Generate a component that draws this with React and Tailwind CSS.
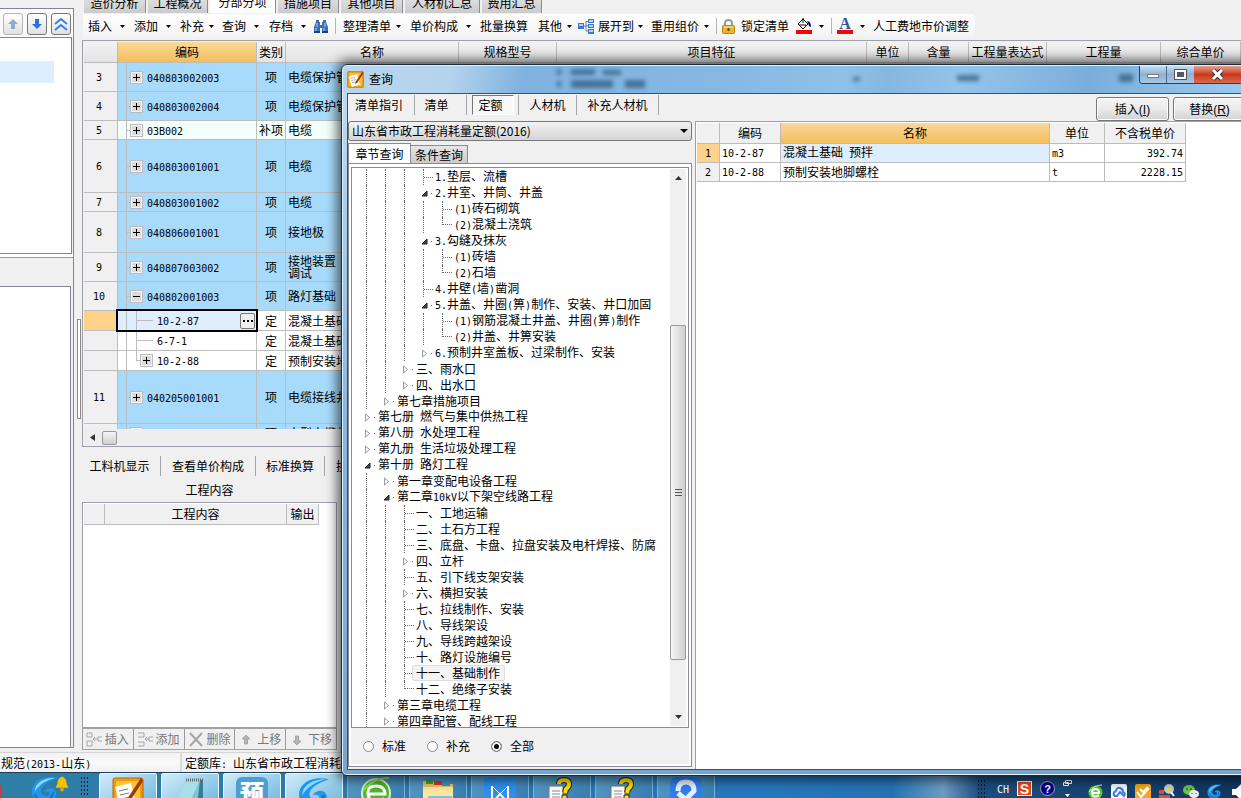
import React, { useState } from 'react'
import clsx from 'clsx'

const TABS = [
  { label: '造价分析', w: 'w-[62px]' },
  { label: '工程概况', w: 'w-[60px]' },
  { label: '分部分项', w: 'w-[66px]', active: true },
  { label: '措施项目', w: 'w-[61px]' },
  { label: '其他项目', w: 'w-[62px]' },
  { label: '人材机汇总', w: 'w-[75px]' },
  { label: '费用汇总', w: 'w-[60px]' },
]

const COLUMNS = [
  { label: '', w: 'w-[34px]' },
  { label: '编码', w: 'w-[139px]', active: true },
  { label: '类别', w: 'w-[29px]' },
  { label: '名称', w: 'w-[173px]' },
  { label: '规格型号', w: 'w-[98px]' },
  { label: '项目特征', w: 'w-[310px]' },
  { label: '单位', w: 'w-[42px]' },
  { label: '含量', w: 'w-[60px]' },
  { label: '工程量表达式', w: 'w-[78px]' },
  { label: '工程量', w: 'w-[114px]' },
  { label: '综合单价', w: 'w-auto' },
]

const ROWS = [
  { no: '3', code: '040803002003', kind: '项', name: '电缆保护管', h: 'h-[29px]', box: '+' },
  { no: '4', code: '040803002004', kind: '项', name: '电缆保护管', h: 'h-[29px]', box: '+' },
  { no: '5', code: '03B002', kind: '补项', name: '电缆', h: 'h-[19px]', box: '+', tone: 'bg-[#f2fffa]' },
  { no: '6', code: '040803001001', kind: '项', name: '电缆', h: 'h-[53px]', box: '+' },
  { no: '7', code: '040803001002', kind: '项', name: '电缆', h: 'h-[19px]', box: '+' },
  { no: '8', code: '040806001001', kind: '项', name: '接地极', h: 'h-[41px]', box: '+' },
  { no: '9', code: '040807003002', kind: '项', name: '接地装置调试', h: 'h-[29px]', box: '+' },
  { no: '10', code: '040802001003', kind: '项', name: '路灯基础', h: 'h-[29px]', box: '-' },
  { no: '', code: '10-2-87', kind: '定', name: '混凝土基础', h: 'h-[20px]', child: true, selected: true, tone: 'bg-white' },
  { no: '', code: '6-7-1', kind: '定', name: '混凝土基础', h: 'h-[20px]', child: true, tone: 'bg-white' },
  { no: '', code: '10-2-88', kind: '定', name: '预制安装地脚螺栓', h: 'h-[20px]', child: true, last: true, box: '+', tone: 'bg-white' },
  { no: '11', code: '040205001001', kind: '项', name: '电缆接线井', h: 'h-[53px]', box: '+' },
  { no: '12', code: '040205001002', kind: '项', name: '大型电缆井', h: 'h-[19px]', box: '+' },
]

// d = depth, s = open / closed / leaf / last
const TREE = [
  { d: 3, s: 'leaf', t: '1.垫层、流槽' },
  { d: 3, s: 'open', t: '2.井室、井筒、井盖' },
  { d: 4, s: 'leaf', t: '(1)砖石砌筑' },
  { d: 4, s: 'last', t: '(2)混凝土浇筑' },
  { d: 3, s: 'open', t: '3.勾缝及抹灰' },
  { d: 4, s: 'leaf', t: '(1)砖墙' },
  { d: 4, s: 'last', t: '(2)石墙' },
  { d: 3, s: 'leaf', t: '4.井壁(墙)凿洞' },
  { d: 3, s: 'open', t: '5.井盖、井圈(箅)制作、安装、井口加固' },
  { d: 4, s: 'leaf', t: '(1)钢筋混凝土井盖、井圈(箅)制作' },
  { d: 4, s: 'last', t: '(2)井盖、井箅安装' },
  { d: 3, s: 'closed', t: '6.预制井室盖板、过梁制作、安装' },
  { d: 2, s: 'closed', t: '三、雨水口' },
  { d: 2, s: 'closed', t: '四、出水口' },
  { d: 1, s: 'closed', t: '第七章措施项目' },
  { d: 0, s: 'closed', t: '第七册 燃气与集中供热工程' },
  { d: 0, s: 'closed', t: '第八册 水处理工程' },
  { d: 0, s: 'closed', t: '第九册 生活垃圾处理工程' },
  { d: 0, s: 'open', t: '第十册 路灯工程' },
  { d: 1, s: 'closed', t: '第一章变配电设备工程' },
  { d: 1, s: 'open', t: '第二章10kV以下架空线路工程' },
  { d: 2, s: 'leaf', t: '一、工地运输' },
  { d: 2, s: 'leaf', t: '二、土石方工程' },
  { d: 2, s: 'leaf', t: '三、底盘、卡盘、拉盘安装及电杆焊接、防腐' },
  { d: 2, s: 'closed', t: '四、立杆' },
  { d: 2, s: 'leaf', t: '五、引下线支架安装' },
  { d: 2, s: 'closed', t: '六、横担安装' },
  { d: 2, s: 'leaf', t: '七、拉线制作、安装' },
  { d: 2, s: 'leaf', t: '八、导线架设' },
  { d: 2, s: 'leaf', t: '九、导线跨越架设' },
  { d: 2, s: 'leaf', t: '十、路灯设施编号' },
  { d: 2, s: 'leaf', t: '十一、基础制作', selected: true },
  { d: 2, s: 'last', t: '十二、绝缘子安装' },
  { d: 1, s: 'closed', t: '第三章电缆工程' },
  { d: 1, s: 'closed', t: '第四章配管、配线工程' },
]

// Latin runs are set half as wide as a Chinese character
function T({ children }) {
  return String(children).split(/([\x20-\x7e]+)/).filter(Boolean).map((part, i) =>
    /^[\x20-\x7e]/.test(part)
      ? <span key={i} className="font-['DejaVu_Sans_Mono',monospace] text-[10px] whitespace-pre">{part}</span>
      : part
  )
}

const Caret = () => <svg width="5" height="3" className="shrink-0"><path d="M0 0h5L2.5 3z" fill="#000" /></svg>

function App() {
  return (
    <div className="relative flex h-screen flex-col overflow-hidden bg-[#f0f0f0] font-['Noto_Sans_CJK_SC',sans-serif] text-[12px] leading-4 text-black">
      <div className="flex min-h-0 flex-1">
        <SidePanel />
        <main className="flex min-w-0 flex-1 flex-col">
          <nav className="flex h-[13px] shrink-0 items-end overflow-hidden pl-[2px]">
            {TABS.map(t => (
              <button key={t.label} className={clsx('mr-[2px] h-[20px] shrink-0 border-r border-[#8a8a99]', t.w, t.active ? 'bg-white pb-[2px]' : 'bg-linear-to-b from-[#e6e6e6] to-[#cbcbcb]')}>{t.label}</button>
            ))}
          </nav>
          <Toolbar />
          <BillGrid />
          <DetailPanel />
        </main>
      </div>
      <footer className="flex h-[20px] shrink-0 border-t border-[#d5d5d5]">
        <div className="w-[182px] border-r-2 border-[#dadada] bg-linear-to-b from-[#f2f2f2] via-[#fafafa] to-[#efefef] pl-px leading-[20px]"><T>规范(2013-山东)</T></div>
        <div className="ml-[2px] flex-1 bg-linear-to-b from-[#f2f2f2] via-[#fafafa] to-[#efefef] pl-px leading-[20px]"><T>定额库: 山东省市政工程消耗量定额(2016)</T></div>
      </footer>
      <Taskbar />
      <QueryDialog />
    </div>
  )
}

function SidePanel() {
  const btn = 'flex h-[22px] w-[20px] items-center justify-center rounded-[3px] border bg-linear-to-b from-white to-[#e0e0e0]'
  return (
    <aside className="flex w-[82px] shrink-0">
      <div className="flex w-[74px] flex-col pt-2 pb-[4px]">
        <div className="flex min-h-0 flex-1 flex-col border-t border-r border-b border-[#85858f]">
          <div className="flex h-[28px] items-center gap-1 bg-[#fafafa] pt-[2px] pl-[3px]">
            <button aria-label="上移" className={clsx(btn, 'border-[#b5b5b5]')}>
              <svg width="10" height="10"><path d="M5 0l5 5H7v5H3V5H0z" fill="#8fa9d0" /></svg>
            </button>
            <button aria-label="下移" className={clsx(btn, 'border-[#777]')}>
              <svg width="10" height="10"><path d="M5 10l5-5H7V0H3v5H0z" fill="#2f6fe0" /></svg>
            </button>
            <button aria-label="置顶" className={clsx(btn, 'border-[#777]')}>
              <svg width="14" height="14" fill="none" stroke="#3a80e0" strokeWidth="2"><path d="M1 7l6-5 6 5M1 13l6-5 6 5" /></svg>
            </button>
          </div>
          <div className="mr-px h-[217px] border-t border-r border-b border-[#85858f] bg-white pt-[23px]">
            <div className="mr-[17px] h-[22px] bg-[#ddeeff]" />
          </div>
          <div className="h-[4px] border-b border-[#9a9aa2] bg-white" />
          <div className="h-[28px] bg-[#f0f0f0]" />
          <div className="mr-[2px] flex-1 border-t border-r border-[#85858f] bg-white" />
        </div>
      </div>
      <div className="flex flex-1 items-center pl-[3px]">
        <div className="mb-[14px] h-[100px] w-[4px] border border-[#888] bg-white" />
      </div>
    </aside>
  )
}

const MENU_A = [
  { label: '插入', c: 'w-[46px] gap-[8px]' },
  { label: '添加', c: 'w-[46px] gap-[8px]' },
  { label: '补充', c: 'w-[42px] gap-[5px]' },
  { label: '查询', c: 'w-[47px] gap-[8px]' },
  { label: '存档', c: 'w-[44px] gap-[8px]' },
]

function MenuButton({ label, c, icon, flat }) {
  return <button className={clsx('flex shrink-0 items-center whitespace-nowrap', c)}>{icon}{label}{!flat && <Caret />}</button>
}

function Toolbar() {
  return (
    <div className="mt-px mb-[3px] ml-px flex h-[23px] w-fit shrink-0 items-center rounded-r bg-linear-to-b from-white to-[#f3f3f3] pt-px pr-[6px] pl-[5px]">
      {MENU_A.map(m => <MenuButton key={m.label} {...m} />)}
      <button aria-label="查找" className="mr-[6px]">
        <svg width="16" height="15" viewBox="0 0 16 15">
          <path d="M3 1h3v2h1v3h2V3h1V1h3v2l2 5v6H9V9H7v5H1V8l2-5z" fill="#3d6fb5" />
          <path d="M4 4v4M12 4v4M3 9v4M11 9v4" stroke="#b8d4f5" />
          <path d="M1 13h6M9 13h6" stroke="#1e3f78" strokeWidth="2" />
        </svg>
      </button>
      <i className="mr-[7px] h-4 border-r border-[#b5b5b5]" />
      <MenuButton label="整理清单" c="w-[67px] gap-[5px]" />
      <MenuButton label="单价构成" c="w-[70px] gap-[8px]" />
      <MenuButton label="批量换算" c="w-[58px]" flat />
      <MenuButton label="其他" c="w-[40px] gap-[5px]" />
      <MenuButton label="展开到" c="w-[73px] gap-[4px]" icon={
        <svg width="16" height="15" viewBox="0 0 16 15">
          <path d="M6 7h4M8 2.5h2M8 12h2M8 2v10" stroke="#6d7f9c" fill="none" />
          <path d="M0 4h6v6H0zM10 0h6v4h-6zM10 5h6v4h-6zM10 10h6v5h-6z" fill="#3b76d4" />
          <path d="M1 6h4M11 2h4M11 7h4M11 12h4" stroke="#b9d3fa" strokeWidth="2" />
        </svg>} />
      <MenuButton label="重用组价" c="w-[65px] gap-[5px]" />
      <i className="mr-[5px] h-4 border-r border-[#b5b5b5]" />
      <MenuButton label="锁定清单" c="w-[74px] gap-[6px]" flat icon={
        <svg width="13" height="15" viewBox="0 0 13 15">
          <path d="M3 7V4a3.5 3 0 017 0v3" fill="none" stroke="#999" strokeWidth="2" />
          <rect x=".5" y="6.5" width="12" height="8" rx="1" fill="#eab62f" stroke="#b98212" />
          <path d="M2 8h9" stroke="#fff0a8" /><path d="M6.500 9v3" stroke="#6b4a00" strokeWidth="2" />
        </svg>} />
      <button aria-label="填充颜色" className="flex w-[35px] items-center gap-[7px]">
        <svg width="16" height="16" viewBox="0 0 16 16">
          <path d="M2 6l5-5 5 5-5 5z" fill="#fff" stroke="#000" /><path d="M7 0v5M3 7h7" stroke="#000" />
          <path d="M11 3q4 0 4 6l-2-1-1-3z" fill="#00007a" /><path d="M0 12h16v4H0z" fill="#f00" />
        </svg>
        <Caret />
      </button>
      <i className="mr-[5px] h-4 border-r border-[#b5b5b5]" />
      <button aria-label="字体颜色" className="flex w-[36px] items-center gap-[7px]">
        <span className="flex h-4 w-4 items-center justify-center border-b-4 border-[#f00] font-['Liberation_Serif',serif] text-[16px] leading-3 font-bold text-[#2f55a0]">A</span>
        <Caret />
      </button>
      <MenuButton label="人工费地市价调整" c="" flat />
    </div>
  )
}

function TreeBox({ sign }) {
  return (
    <svg width="13" height="13" className="shrink-0">
      <rect x=".5" y=".5" width="12" height="12" fill="#f4f4f4" stroke="#bdbdbd" />
      <rect x="2" y="2" width="9" height="9" fill="#dcdcdc" />
      <path d={sign === '+' ? 'M3 6.500h7M6.500 3v7' : 'M3 6.500h7'} stroke="#000" />
    </svg>
  )
}

function CodeCell({ row }) {
  if (!row.child) {
    return (
      <div className="flex h-full items-center">
        <i className="ml-[8px] h-full border-l border-[#bdbdbd]" />
        <i className="w-[3px] border-t border-[#bdbdbd]" />
        <TreeBox sign={row.box} />
        <span className="pt-px pl-1"><T>{row.code}</T></span>
      </div>
    )
  }
  return (
    <div className={clsx('flex h-full items-center', row.selected && 'relative bg-[#deeeff] outline-2 outline-black')}>
      <i className="ml-[8px] h-full border-l border-[#bdbdbd]" />
      <i className={clsx('ml-[9px] self-start border-l border-[#bdbdbd]', row.last ? 'h-1/2' : 'h-full')} />
      <i className={clsx('border-t border-[#bdbdbd]', row.box ? 'w-[3px]' : 'w-4')} />
      {row.box && <TreeBox sign={row.box} />}
      <span className="pt-px pl-1"><T>{row.code}</T></span>
      {row.selected && (
        <button aria-label="选择" className="mr-px ml-auto flex h-4 w-[15px] items-center justify-center gap-[2px] rounded-[2px] border border-[#777] bg-[#eee]">
          <i className="size-[2px] bg-black" /><i className="size-[2px] bg-black" /><i className="size-[2px] bg-black" />
        </button>
      )}
    </div>
  )
}

function BillGrid() {
  return (
    <section className="flex min-h-0 flex-1 flex-col border border-r-0 border-[#a0a0aa] pt-px pl-px">
      <div className="min-h-0 flex-1 overflow-hidden">
        <table className="w-full table-fixed border-separate border-spacing-0 leading-[14px]">
          <thead>
            <tr>
              {COLUMNS.map((c, i) => (
                <th key={i} className={clsx('h-[21px] overflow-hidden border-r border-b border-[#bcbcbc] p-0 font-normal whitespace-nowrap', c.w, c.active ? 'bg-linear-to-b from-[#fad898] to-[#f3be5c]' : 'bg-linear-to-b from-[#f2f2f2] to-[#e4e4e4]')}>{c.label}</th>
              ))}
            </tr>
          </thead>
          <tbody>
            {ROWS.map((r, i) => {
              const cell = clsx('overflow-hidden border-r border-b border-[#bdbdbd] p-0', r.h, r.tone || 'bg-[#a8dbfb]')
              return (
                <tr key={i}>
                  <td className={clsx('border-r border-b border-[#bdbdbd] p-0 pr-[3px] text-center', r.selected ? 'bg-[#ffd28c]' : 'bg-[#f0f0f0]')}><T>{r.no}</T></td>
                  <td className={clsx(cell, 'overflow-visible')}><CodeCell row={r} /></td>
                  <td className={clsx(cell, 'text-center whitespace-nowrap')}>{r.kind}</td>
                  <td className={clsx(cell, 'pl-[2px]')}><div className="w-[54px] leading-3">{r.name.length > 5 && !r.child ? r.name : <span className="whitespace-nowrap">{r.name}</span>}</div></td>
                  {COLUMNS.slice(4).map(c => <td key={c.label} className={cell} />)}
                </tr>
              )
            })}
          </tbody>
        </table>
      </div>
      <div className="flex h-[17px] shrink-0 items-center gap-[7px] bg-[#eee] pl-[6px]">
        <svg width="5" height="7"><path d="M5 0v7L0 3.500z" fill="#333" /></svg>
        <div className="h-[14px] w-[15px] rounded-[2px] border border-[#999] bg-linear-to-b from-[#f5f5f5] to-[#d0d0d0]" />
      </div>
    </section>
  )
}

const GRAY_BTNS = [
  { label: '插入', d: 'M1 1h5v4H1zM1 9h5v5H1zM16 5h-4v4h4M12 7H7M9 5L7 7l2 2' },
  { label: '添加', d: 'M1 1h6v4H1M1 10h6v4H1M16 5h-4v4h4M12 7H8M10 5L8 7l2 2' },
  { label: '删除', d: 'M2 1l12 13M14 1L2 14' },
  { label: '上移', d: 'M8 3l4 4H9.500v5h-3V7H4z' },
  { label: '下移', d: 'M8 13l4-4H9.500V4h-3v5H4z' },
]

function DetailPanel() {
  const sep = 'h-5 border-r border-[#a5a5a5] leading-5'
  return (
    <section className="shrink-0 overflow-hidden whitespace-nowrap">
      <div className="flex pt-[9px]">
        <button className={clsx(sep, 'w-[79px] pr-[3px]')}>工料机显示</button>
        <button className={clsx(sep, 'w-[95px]')}>查看单价构成</button>
        <button className={clsx(sep, 'w-[69px]')}>标准换算</button>
        <button className="pl-[11px] leading-5">换算信息</button>
      </div>
      <div className="w-[255px]">
        <h2 className="pt-1 pb-[2px] text-center leading-[20px]">工程内容</h2>
        <div className="h-[225px] border border-b-0 border-[#a0a0aa] bg-white pt-px pl-px">
          <table className="table-fixed border-separate border-spacing-0 bg-[#f0f0f0]">
            <thead>
              <tr>
                <th className="h-[21px] w-[21px] border-r border-b border-[#bcbcbc] p-0" />
                <th className="w-[182px] border-r border-b border-[#bcbcbc] p-0 font-normal">工程内容</th>
                <th className="w-[32px] border-r border-b border-[#bcbcbc] p-0 font-normal">输出</th>
              </tr>
            </thead>
          </table>
        </div>
        <div className="mb-[2px] flex h-[23px] border-t-2 border-b border-l border-[#a0a0a0]">
          {GRAY_BTNS.map(b => (
            <button key={b.label} disabled className="flex flex-1 items-center justify-between border-r border-[#999] bg-[#f0f0f0] pr-1 pl-[3px] text-[#777]">
              <svg width="17" height="15" fill="none" stroke="#a5a5a5"><path d={b.d} strokeWidth={b.label === '删除' ? 2 : 1} fill={b.label.includes('移') ? '#b5b5b5' : 'none'} /></svg>
              {b.label}
            </button>
          ))}
        </div>
      </div>
    </section>
  )
}

function Swirl({ size = 30 }) {
  return (
    <svg width={size} height={size} viewBox="0 0 30 30" className="shrink-0">
      <path d="M29 2C17-1 1 3 1 17c0 8 6 12 13 12 8 0 13-5 13-12-2-4-6-5-10-3-2 1-3 2-3 3 3-1 6 0 6 2 0 3-7 4-9-1-2-7 7-12 18-16z" fill="#2196ea" />
      <path d="M26 2C13 2 4 8 4 17 8 10 15 5 26 2z" fill="#8ad8ff" />
      <path d="M4 20q3 7 11 6 8-1 9-9" fill="none" stroke="#0f6fc4" strokeWidth="2" />
    </svg>
  )
}

function PenIcon({ size = 32 }) {
  return (
    <svg width={size} height={size} viewBox="0 0 32 32">
      <rect x="1" y="1" width="30" height="30" rx="2" fill="#f29a0c" stroke="#b9600a" />
      <rect x="4" y="4" width="24" height="24" fill="#ffc52e" />
      <path d="M3 10l16-4 5 20-15 4z" fill="#fff" /><path d="M7 14l9-2M8 18l9-2M9 22l9-2" stroke="#777" />
      <path d="M29 1L17 19l-2 6 5-4L31 4z" fill="#9c3b10" />
    </svg>
  )
}

const HelpDoc = () => (
  <svg width="32" height="32" viewBox="0 0 32 32">
    <path d="M3 9h14v21H3z" fill="#fff" stroke="#777" /><path d="M6 14h8M6 17h8M6 20h8" stroke="#888" />
    <path d="M13 7q0-4 5-4t5 4q0 3-3 5l-1 4" fill="none" stroke="#222" strokeWidth="6" />
    <path d="M13 7q0-4 5-4t5 4q0 3-3 5l-1 4" fill="none" stroke="#ffe100" strokeWidth="4" />
    <path d="M16 18h5v4h-5z" fill="#ffe100" stroke="#222" />
  </svg>
)

const TASKS = [
  { name: '计价软件', on: true, icon: <PenIcon /> },
  { name: '记事本', on: true, icon: (
    <svg width="32" height="32" viewBox="0 0 32 32"><path d="M12 3h17l-6 26H0z" fill="#7fc4d4" /><path d="M12 3h14L14 29H0z" fill="#a9dfe8" /><path d="M26 3h3v26h-6z" fill="#337f94" /><path d="M12 3h17" stroke="#666" strokeWidth="3" strokeDasharray="1 1" /></svg>) },
  { name: '预算', on: true, icon: <span className="h-8 w-8 rounded-md bg-[#4d9fd0] text-center text-[24px] leading-[30px] font-black text-white">预</span> },
  { name: '广联达', on: true, icon: <Swirl size={32} /> },
  { name: '浏览器', icon: (
    <svg width="32" height="32" viewBox="0 0 32 32"><circle cx="16" cy="16" r="14" fill="#4fb52c" stroke="#d6f2c8" strokeWidth="2" /><path d="M8 17h17q0-8-9-8t-8 8 8 8q5 0 8-4" fill="none" stroke="#fff" strokeWidth="3" /><path d="M3 14Q14 0 29 1" fill="none" stroke="#8be35d" strokeWidth="2" /></svg>) },
  { name: '资源管理器', icon: (
    <svg width="32" height="32" viewBox="0 0 32 32"><path d="M1 4h10l2 3h18v24H1z" fill="#e9c865" /><path d="M4 2h7v5H4z" fill="#3f9e3a" /><path d="M12 4h8v4h-8z" fill="#d33" /><path d="M20 5h8v4h-8z" fill="#39c" /><path d="M1 10h30v21H1z" fill="#fbe7a0" /><path d="M6 19h24v12H6z" fill="#79c4ea" /></svg>) },
  { name: 'WPS', icon: (
    <svg width="32" height="32" viewBox="0 0 32 32"><rect width="32" height="32" rx="4" fill="#2f8fef" /><path d="M8 9v17l8-9 8 9V9" fill="none" stroke="#fff" strokeWidth="2" /><path d="M8 9l8 8 8-8" fill="none" stroke="#fff" /></svg>) },
  { name: '帮助一', icon: <HelpDoc /> },
  { name: '帮助二', icon: <HelpDoc /> },
  { name: '云盘', icon: (
    <svg width="32" height="32" viewBox="0 0 32 32"><rect width="32" height="32" rx="7" fill="#2d7ff0" /><path d="M8 14q0-9 8-9t8 9L12 26M8 16l14 12" fill="none" stroke="#e8f2ff" strokeWidth="5" /></svg>) },
]

function Grip() {
  return <i className="h-5 w-[9px] shrink-0 bg-[radial-gradient(#0a2036_1px,transparent_1px)] bg-size-[3px_4px]" />
}

function Taskbar() {
  return (
    <div className="flex h-[26px] shrink-0 items-start overflow-hidden border-t border-[#1c3d55] bg-[linear-gradient(90deg,#2f7ea6_0%,#2c76ae_40%,#2577bd_60%,#2673b4_72%,#6d9cc4_76%,#1b4d7f_79%,#12375f_100%)]">
      <div className="flex w-[99px] shrink-0 items-start pt-[3px]">
        <i className="mt-[9px] mr-[29px] h-4 w-[2px] bg-[#d33c3c]" />
        <Swirl size={28} />
        <svg width="14" height="16" viewBox="0 0 15 16" className="-ml-1 shrink-0"><path d="M7.500 0q5 2 5 8l2 4H.5l2-4q0-6 5-8z" fill="#f2c200" /><circle cx="7.500" cy="14" r="2" fill="#e0a800" /></svg>
        <span className="ml-[11px] flex"><Grip /></span>
      </div>
      {TASKS.map(t => (
        <button key={t.name} aria-label={t.name} className={clsx('mr-1 flex h-[40px] w-[58px] shrink-0 justify-center rounded-[2px] border pt-[3px]', t.on ? 'border-[#eaf8ff] bg-linear-to-br from-[#d0ecf9] to-[#62b2dc]' : 'border-[#7fb6d6] bg-linear-to-br from-[#5d9fc8] to-[#2d75ad]')}>{t.icon}</button>
      ))}
      <div className="ml-auto flex h-full shrink-0 items-center gap-[8px] pt-[6px] text-white">
        <Grip />
        <span className="ml-[3px]"><T>CH</T></span>
        <span className="flex size-[15px] items-center justify-center border border-white bg-[#e8491d] font-['Liberation_Sans',sans-serif] text-[14px] font-bold">S</span>
        <span className="flex size-[15px] items-center justify-center rounded-full border border-[#aaa] bg-[#00008c] font-['Liberation_Sans',sans-serif] text-[11px] font-bold">?</span>
        <svg width="9" height="18" fill="none" stroke="#fff"><path d="M2.500.5h6v3h-6zM.5 2.500h5v3h-5z" /><path d="M2 14h5l-2.500 3z" fill="#fff" stroke="none" /></svg>
        <div className="flex gap-[8px] pt-[6px] pl-[8px]">
          <svg width="15" height="16" viewBox="0 0 15 16"><circle cx="7.500" cy="8.500" r="7" fill="#5fc336" /><path d="M4 9h7q0-4-3.500-4T4 9t4 3.500l3-1" fill="none" stroke="#fff" strokeWidth="2" /><path d="M1 8Q6 1 14 1" fill="none" stroke="#d8f7c9" /></svg>
          <svg width="16" height="16"><rect width="16" height="16" rx="2" fill="#f5f9ff" /><path d="M4 12q-2-1-1-3.500L5 7q1-4 4-3t3 4q3 1 1 4L9 8l-3 4z" fill="none" stroke="#3b7de0" strokeWidth="2" /></svg>
          <svg width="16" height="16"><rect width="16" height="16" rx="2" fill="#f5a71c" /><path d="M2 8l4 5 8-9M5 5l3 3 5-5" fill="none" stroke="#fff" strokeWidth="2" /></svg>
          <svg width="16" height="16"><path d="M0 6h5v4H0zM0 11h11v5H0z" fill="#d8532b" /><circle cx="10" cy="5" r="4" fill="#f2cf63" stroke="#a9cdf0" strokeWidth="2" /><path d="M12 8l3 4" stroke="#fff" strokeWidth="2" /></svg>
          <svg width="16" height="16"><ellipse cx="6" cy="6" rx="6" ry="5" fill="#6cc644" /><ellipse cx="11" cy="10" rx="5" ry="4" fill="#eee" /><path d="M4 4v2M8 4v2M9 9v1M13 9v1" stroke="#333" /></svg>
          <Swirl size={15} />
          <svg width="9" height="16" className="ml-[2px]"><path d="M0 5h4l5-5v16l-5-5H0z" fill="#fff" /></svg>
        </div>
      </div>
    </div>
  )
}

function TreeRow({ node }) {
  const leaf = node.s === 'leaf' || node.s === 'last'
  return (
    <li className="flex h-4 items-center whitespace-nowrap">
      {Array.from({ length: node.d }, (_, k) => (
        <i key={k} className="h-full w-[19px] shrink-0 pl-[9px]"><i className="block h-full border-l border-dotted border-[#666]" /></i>
      ))}
      {leaf ? (
        <span className="h-full w-[21px] shrink-0 pl-[9px]">
          <i className={clsx('flex w-[10px] items-center border-l border-dotted border-[#666]', node.s === 'last' ? 'h-1/2 border-b' : 'h-full')}>
            {node.s === 'leaf' && <i className="w-[9px] border-t border-dotted border-[#666]" />}
          </i>
        </span>
      ) : (
        <button aria-label={node.s === 'open' ? '折叠' : '展开'} className="flex w-[21px] shrink-0 items-center gap-[3px] pl-[7px]">
          {node.s === 'open'
            ? <svg width="7" height="7"><path d="M6 1v5H1z" fill="#444" stroke="#222" /></svg>
            : <svg width="7" height="9"><path d="M1.500 1v7l4-3.500z" fill="#fff" stroke="#9a9a9a" /></svg>}
          <i className="size-px bg-[#666]" />
        </button>
      )}
      <span className={clsx(node.selected && '-ml-1 rounded-[2px] border border-[#ddd] bg-[#f3f3f3] pr-1 pl-[3px] leading-[14px]')}><T>{node.t}</T></span>
    </li>
  )
}

function QueryDialog() {
  const [range, setRange] = useState('全部')
  const tab = 'h-5 border-r border-[#a5a5a5] leading-5 whitespace-nowrap'
  const push = 'h-6 w-[73px] rounded-[3px] border border-[#777] bg-linear-to-b from-[#f6f6f6] via-[#eaeaea] to-[#d2d2d2] shadow-[inset_0_0_0_1px_#fff]'
  return (
    <div role="dialog" aria-label="查询" className="absolute top-[64px] -right-[12px] bottom-[22px] left-[341px] flex flex-col rounded-[6px] border border-[#1c2b38] bg-linear-to-b from-[#c4ddf0] via-[#84b8e4] to-[#7aa4cc] px-[5px] pb-[5px] shadow-[0_0_12px_4px_rgba(0,0,0,0.6),inset_0_0_0_1px_#e3f1fc]">
      <header className="-mx-[4px] mt-px flex h-[27px] shrink-0 overflow-hidden rounded-t-[5px] bg-[linear-gradient(100deg,#b9d6ee_0%,#b4d3ed_12%,#7fb2de_20%,#86b8e2_42%,#8fc0e8_55%,#86b7e0_60%,#95c4ea_68%,#7aaeda_82%,#9bcaf0_100%)] pl-[4px]">
        <span className="mt-[5px] shrink-0"><PenIcon size={17} /></span>
        <h1 className="mt-[5px] ml-[5px] shrink-0 leading-4 whitespace-nowrap">查询</h1>
        <svg className="ml-[158px] h-[27px] w-[600px] shrink blur-[2px]" fill="#2c567a" opacity=".7">
          <path d="M6 3h4v6H6zM20 3h24v6H20zM52 4h18v5H52zM6 15h4v6H6zM20 14h42v8H20zM74 14h20v8H74zM302 11h7v4h-7zM406 9h22v6h-22zM568 8h14v8h-14z" />
        </svg>
        <div className="mr-[8px] ml-auto flex h-[18px] shrink-0 overflow-hidden rounded-b-[4px] border border-t-0 border-[#27425c]">
          <button aria-label="最小化" className="flex w-[27px] items-end justify-center border-r border-[#4a6d8c] bg-linear-to-b from-[#c6dff3] via-[#8fb2d2] to-[#a5c8e6] pb-[5px]"><i className="h-1 w-3 border border-[#778] bg-white" /></button>
          <button aria-label="最大化" className="flex w-[27px] items-center justify-center bg-linear-to-b from-[#c6dff3] via-[#8fb2d2] to-[#a5c8e6]"><i className="h-[9px] w-[11px] border-2 border-white bg-[#556] outline outline-[#556]" /></button>
          <button aria-label="关闭" className="flex w-[48px] items-center justify-center bg-linear-to-b from-[#e3a08f] via-[#c9361c] to-[#d9694a]">
            <svg width="14" height="12"><path d="M2 1l9 9M11 1l-9 9" stroke="#433" strokeWidth="5" /><path d="M2 1l9 9M11 1l-9 9" stroke="#fff" strokeWidth="3" /></svg>
          </button>
        </div>
      </header>
      <div className="flex min-h-0 flex-1 flex-col border border-[#3a5166] bg-[#f0f0f0]">
        <div className="flex h-[27px] shrink-0 items-start pt-px">
          <button className={clsx(tab, 'w-[67px] pr-1')}>清单指引</button>
          <button className={clsx(tab, 'w-[52px] pr-2')}>清单</button>
          <span className={clsx(tab, 'flex w-[52px] pl-[5px]')}><button className="h-5 w-[42px] border border-t-[#777] border-r-white border-b-white border-l-[#777] bg-[#f8f8f8] pr-[5px] leading-[18px]">定额</button></span>
          <button className={clsx(tab, 'w-[58px]')}>人材机</button>
          <button className={clsx(tab, 'w-[82px]')}>补充人材机</button>
          <div className="mt-[2px] ml-auto flex gap-1">
            <button className={push}>插入<span className="font-['Liberation_Sans',sans-serif]">(<u>I</u>)</span></button>
            <button className={push}>替换<span className="font-['Liberation_Sans',sans-serif]">(<u>R</u>)</span></button>
          </div>
        </div>
        <div className="flex min-h-0 flex-1">
          <div className="flex w-[347px] shrink-0 flex-col pr-[3px]">
            <label className="relative block">
              <select aria-label="定额库" className="h-5 w-full appearance-none rounded-[3px] border border-[#777] bg-linear-to-b from-[#f3f3f3] to-[#d4d4d4] pl-[3px] leading-4">
                <option>山东省市政工程消耗量定额(2016)</option>
              </select>
              <svg width="8" height="5" className="pointer-events-none absolute top-2 right-1"><path d="M0 0h8L4 4z" fill="#000" /></svg>
            </label>
            <div className="mt-[2px] flex h-5 items-end">
              <button className="h-5 w-[63px] border border-b-0 border-[#8a8a96] bg-white">章节查询</button>
              <button className="h-[18px] w-[57px] border border-b-0 border-l-0 border-[#8a8a96] bg-linear-to-b from-[#e6e6e6] to-[#cbcbcb]">条件查询</button>
            </div>
            <div className="mb-[2px] flex min-h-0 flex-1 flex-col border border-[#8a8a96] bg-white px-[2px] pt-[3px] pb-[2px]">
              <div className="flex min-h-0 flex-1 overflow-hidden border border-[#8a8a96] pt-px">
                <ul className="min-w-0 flex-1 overflow-hidden pl-[5px]">
                  {TREE.map((n, i) => <TreeRow key={i} node={n} />)}
                </ul>
                <div className="mr-[2px] mb-px flex w-[16px] shrink-0 flex-col items-center bg-[#f0f0f0]">
                  <svg width="7" height="4" className="mt-[7px] shrink-0"><path d="M0 4h7L3.500 0z" fill="#333" /></svg>
                  <div className="mt-[145px] flex h-[335px] w-full flex-col items-center justify-center gap-[2px] rounded-[2px] border border-[#999] bg-linear-to-r from-[#f6f6f6] to-[#cfcfcf]">
                    <i className="h-px w-[7px] bg-[#555]" /><i className="h-px w-[7px] bg-[#555]" /><i className="h-px w-[7px] bg-[#555]" />
                  </div>
                  <svg width="7" height="4" className="mt-auto mb-[7px] shrink-0"><path d="M0 0h7L3.500 4z" fill="#333" /></svg>
                </div>
              </div>
              <div className="flex h-[36px] shrink-0 items-center gap-[21px] bg-[#f0f0f0] pl-3">
                {['标准', '补充', '全部'].map(v => (
                  <label key={v} className="flex items-center gap-[8px]">
                    <input type="radio" name="range" checked={range === v} onChange={() => setRange(v)} className="size-[11px] appearance-none rounded-full border border-[#888] bg-white checked:bg-black checked:shadow-[inset_0_0_0_2px_#fff]" />
                    {v}
                  </label>
                ))}
              </div>
            </div>
          </div>
          <div className="min-w-0 flex-1 overflow-hidden border-t border-l border-[#a0a0a0] bg-white pt-px pl-px">
            <ResultTable />
          </div>
        </div>
      </div>
    </div>
  )
}

function ResultTable() {
  const th = 'h-[21px] border-r border-b border-[#bcbcbc] bg-[#f0f0f0] p-0 font-normal'
  const td = 'h-[19px] border-r border-b border-[#bcbcbc] p-0 px-[2px]'
  const rows = [
    ['1', '10-2-87', '混凝土基础 预拌', 'm3', '392.74'],
    ['2', '10-2-88', '预制安装地脚螺栓', 't', '2228.15'],
  ]
  return (
    <table className="w-[489px] table-fixed border-separate border-spacing-0">
      <thead>
        <tr>
          <th className={clsx(th, 'w-[23px]')} />
          <th className={clsx(th, 'w-[61px]')}>编码</th>
          <th className={clsx(th, 'w-[269px] bg-linear-to-b from-[#fad898] to-[#f3be5c]')}>名称</th>
          <th className={clsx(th, 'w-[55px]')}>单位</th>
          <th className={clsx(th, 'w-[81px]')}>不含税单价</th>
        </tr>
      </thead>
      <tbody>
        {rows.map(([no, code, name, unit, price], i) => (
          <tr key={no}>
            <td className={clsx(td, 'text-center', i === 0 ? 'bg-[#ffd28c]' : 'bg-[#f0f0f0]')}><T>{no}</T></td>
            <td className={td}><T>{code}</T></td>
            <td className={clsx(td, i === 0 && 'bg-[#deeeff]')}><T>{name}</T></td>
            <td className={td}><T>{unit}</T></td>
            <td className={clsx(td, 'text-right')}><T>{price}</T></td>
          </tr>
        ))}
      </tbody>
    </table>
  )
}

export default App
